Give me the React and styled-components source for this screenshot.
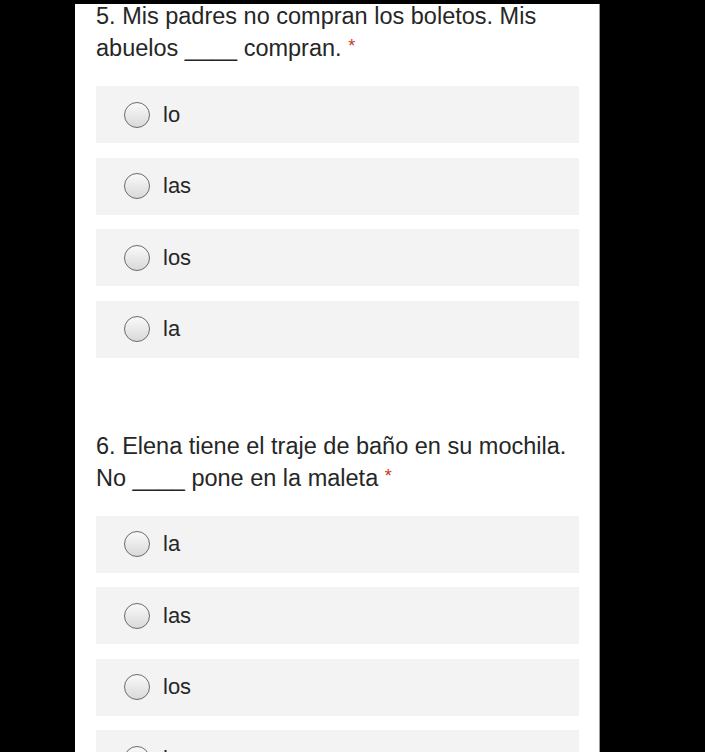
import React from 'react';
import styled, { createGlobalStyle } from 'styled-components';

const questions = [
  {
    id: 5,
    lines: ['5. Mis padres no compran los boletos. Mis', 'abuelos ____ compran.'],
    options: ['lo', 'las', 'los', 'la']
  },
  {
    id: 6,
    lines: ['6. Elena tiene el traje de baño en su mochila.', 'No ____ pone en la maleta'],
    options: ['la', 'las', 'los', 'lo']
  }
];

const App = () => {
  return (
    <Page>
      <GlobalStyle />
      <Panel>
        {questions.map(q => (
          <Question key={q.id}>
            <Title>
              {q.lines[0]}
              <br />
              {q.lines[1]} <Required>*</Required>
            </Title>
            <Options>
              {q.options.map(opt => (
                <Option key={opt}>
                  <Radio />
                  <Label>{opt}</Label>
                </Option>
              ))}
            </Options>
          </Question>
        ))}
      </Panel>
    </Page>
  );
};

const GlobalStyle = createGlobalStyle`
html, body {
  margin: 0;
  padding: 0;
  background: #000;
  height: 100%;
  overflow: hidden;
}
body {
  font-family: "Liberation Sans", Arial, sans-serif;
}
`;

const Page = styled.div`
display: flex;
justify-content: flex-start;
height: 752px;
padding-top: 4px;
box-sizing: border-box;
`;

const Panel = styled.div`
width: 525px;
margin-left: 75px;
background: #fff;
border-right: 1px solid #9a9a9a;
padding: 0 20px 0 21px;
box-sizing: border-box;
overflow: hidden;
`;

const Question = styled.div`
margin-top: -3px;
margin-bottom: 76px;
`;

const Title = styled.div`
font-size: 23.5px;
line-height: 30px;
color: #262626;
margin-bottom: 23px;
white-space: nowrap;
`;

const Required = styled.span`
color: #c43b1d;
font-size: 18px;
vertical-align: 4px;
`;

const Options = styled.div`
display: flex;
flex-direction: column;
gap: 14.5px;
`;

const Option = styled.div`
display: flex;
align-items: center;
height: 57px;
background: #f3f3f3;
padding-left: 28px;
`;

const Radio = styled.span`
width: 24px;
height: 24px;
border-radius: 50%;
border: 1px solid #6b6b6b;
background: linear-gradient(#fafafa, #d9d9d9);
flex-shrink: 0;
`;

const Label = styled.span`
margin-left: 13px;
font-size: 22px;
color: #262626;
`;

export default App;
